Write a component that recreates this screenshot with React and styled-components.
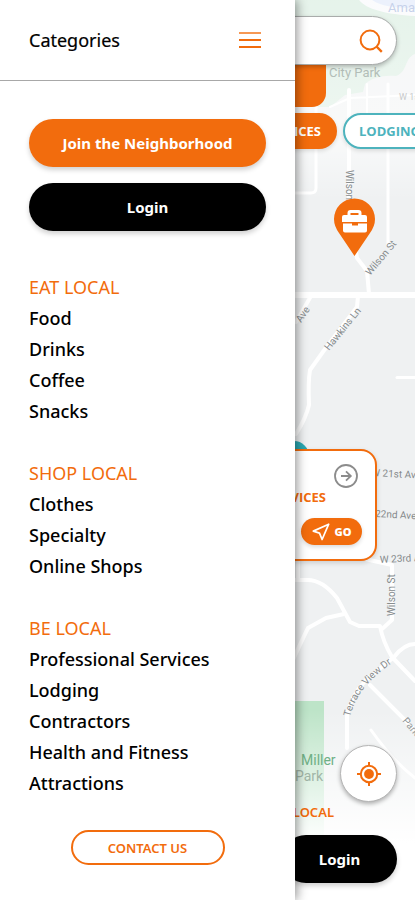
import React from "react";
import styled, { createGlobalStyle, css } from "styled-components";

const ORANGE = "#f26c0d";
const TEAL = "#4db3bd";

const GlobalStyle = createGlobalStyle`
  *, *::before, *::after { box-sizing: border-box; }
  body {
    margin: 0;
    background: #fff;
    color: #000;
    font-family: "Noto Sans", "Open Sans", sans-serif;
  }
  button, input { font: inherit; color: inherit; }
`;

const Page = styled.div`
  position: relative;
  min-height: 100vh;
  overflow: hidden;
`;

/* ---------- Menu drawer ---------- */

const Drawer = styled.aside`
  position: absolute;
  inset: 0 auto 0 0;
  z-index: 2;
  width: 295px;
  background: #fff;
  box-shadow: 2px 0 10px rgba(0, 0, 0, 0.42);
`;

const DrawerHeader = styled.header`
  display: flex;
  align-items: center;
  justify-content: space-between;
  height: 81px;
  padding: 0 34px 0 29px;
  border-bottom: 1px solid #a8a8a8;
`;

const DrawerTitle = styled.h1`
  margin: 0;
  font-size: 18px;
  font-weight: 400;
  line-height: 24px;
  -webkit-text-stroke: 0.2px #000;
`;

const IconButton = styled.button`
  display: flex;
  align-items: center;
  justify-content: center;
  padding: 0;
  border: 0;
  background: none;
  color: ${ORANGE};
  cursor: pointer;
`;

const DrawerBody = styled.div`
  display: flex;
  flex-direction: column;
  padding: 38px 29px 0;
`;

const Actions = styled.div`
  display: flex;
  flex-direction: column;
  gap: 16px;
  margin-bottom: 41px;
`;

const PillButton = styled.button`
  height: 48px;
  padding: 0 24px;
  border: 0;
  border-radius: 24px;
  background: ${({ $dark }) => ($dark ? "#000" : ORANGE)};
  color: #fff;
  font-size: 15px;
  font-weight: 700;
  white-space: nowrap;
  box-shadow: 0 3px 5px rgba(0, 0, 0, 0.18);
  cursor: pointer;
`;

const Menu = styled.nav`
  display: flex;
  flex-direction: column;
  gap: 31px;
`;

const GroupTitle = styled.h2`
  margin: 0;
  color: ${ORANGE};
  font-size: 18px;
  font-weight: 400;
  line-height: 31px;
`;

const LinkList = styled.ul`
  margin: 0;
  padding: 0;
  list-style: none;
`;

const MenuLink = styled.a`
  display: block;
  color: #000;
  font-size: 18px;
  font-weight: 500;
  line-height: 31px;
  text-decoration: none;
`;

const ContactButton = styled.button`
  align-self: center;
  width: 154px;
  height: 35px;
  margin-top: 31px;
  border: 2px solid ${ORANGE};
  border-radius: 18px;
  background: #fff;
  color: ${ORANGE};
  font-size: 13px;
  font-weight: 600;
  cursor: pointer;
`;

/* ---------- Map screen ---------- */

const Screen = styled.main`
  position: relative;
  display: flex;
  flex-direction: column;
  min-height: 100vh;
  padding: 16px 18px 17px;
`;

const MapDrawing = styled.svg`
  position: absolute;
  inset: 0;
  width: 100%;
  height: 100%;
`;

const Layer = styled.div`
  position: relative;
  display: flex;
  flex: 1;
  flex-direction: column;
`;

const SearchBar = styled.form`
  position: relative;
  z-index: 1;
  display: flex;
  align-items: center;
  height: 49px;
  padding: 0 13px 0 24px;
  border: 1px solid #a9acab;
  border-radius: 25px;
  background: #fff;
  box-shadow: 0 2px 4px rgba(0, 0, 0, 0.25);
`;

const SearchInput = styled.input`
  flex: 1;
  min-width: 0;
  border: 0;
  outline: 0;
  background: none;
  font-size: 16px;
`;

const ActiveTab = styled.div`
  align-self: flex-end;
  width: 120px;
  height: 42px;
  margin-right: 71px;
  border-radius: 0 0 14px 14px;
  background: ${ORANGE};
`;

const ChipRow = styled.div`
  display: flex;
  gap: 6px;
  justify-content: flex-end;
  margin: 6px -68px 0 0;
`;

const Chip = styled.button`
  flex: none;
  height: 36px;
  padding: 0 14px;
  border: 2px solid ${({ $active }) => ($active ? ORANGE : TEAL)};
  border-radius: 18px;
  background: ${({ $active }) => ($active ? ORANGE : "#fff")};
  color: ${({ $active }) => ($active ? "#fff" : TEAL)};
  font-family: "Open Sans", "Noto Sans", sans-serif;
  font-size: 13px;
  font-weight: 700;
  white-space: nowrap;
  box-shadow: 0 2px 4px rgba(0, 0, 0, 0.12);
  cursor: pointer;
  ${({ $wide }) => $wide && css`width: 122px; text-align: left;`}
`;

const PlaceCard = styled.article`
  display: flex;
  flex-direction: column;
  align-items: flex-end;
  align-self: flex-end;
  width: 320px;
  height: 112px;
  max-width: 100%;
  margin: 300px 20px 0 0;
  padding: 13px 13px 0;
  border: 2px solid ${ORANGE};
  border-radius: 16px;
  background: #fff;
  box-shadow: 0 2px 5px rgba(0, 0, 0, 0.15);
`;

const ArrowButton = styled(IconButton)`
  margin-right: 4px;
  color: #8c8c8c;
`;

const PlaceKind = styled.p`
  margin: 0 36px 0 0;
  color: ${ORANGE};
  font-family: "Open Sans", "Noto Sans", sans-serif;
  font-size: 13px;
  font-weight: 700;
  line-height: 18px;
`;

const GoButton = styled.button`
  display: flex;
  align-items: center;
  justify-content: center;
  gap: 5px;
  width: 61px;
  height: 27px;
  margin-top: 12px;
  padding: 0;
  border: 0;
  border-radius: 14px;
  background: ${ORANGE};
  color: #fff;
  font-family: "Open Sans", "Noto Sans", sans-serif;
  font-size: 11px;
  font-weight: 800;
  box-shadow: 0 2px 4px rgba(0, 0, 0, 0.15);
  cursor: pointer;
`;

const Footer = styled.footer`
  display: flex;
  flex-direction: column;
  align-items: flex-end;
  margin-top: auto;
`;

const LocateButton = styled(IconButton)`
  width: 57px;
  height: 57px;
  border: 1px solid #b5b5b5;
  border-radius: 50%;
  background: #fff;
  box-shadow: 0 2px 4px rgba(0, 0, 0, 0.3);
`;

const FooterTab = styled.a`
  margin: 0 63px 13px 0;
  color: ${ORANGE};
  font-size: 13px;
  font-weight: 600;
  line-height: 20px;
  text-decoration: none;
`;

const FooterLogin = styled(PillButton)`
  width: 115px;
`;

/* ---------- Icons ---------- */

const MenuIcon = () => (
  <svg width="22" height="18" viewBox="0 0 22 18" fill="none" stroke="currentColor" strokeWidth="2" aria-hidden="true">
    <path d="M0 2h22" opacity=".7" />
    <path d="M0 9h22M0 16h22" />
  </svg>
);

const SearchIcon = () => (
  <svg width="24" height="24" viewBox="0 0 24 24" fill="none" stroke="currentColor" strokeWidth="2" aria-hidden="true">
    <circle cx="11" cy="11" r="9.4" />
    <path d="M17.5 17.5l5.3 5.3" strokeWidth="2.4" />
  </svg>
);

const ArrowIcon = () => (
  <svg width="24" height="24" viewBox="0 0 24 24" fill="none" stroke="currentColor" strokeWidth="1.8" aria-hidden="true">
    <circle cx="12" cy="12" r="11" />
    <path d="M7 12h9.5M12 7.3l4.8 4.7-4.8 4.7" />
  </svg>
);

const SendIcon = () => (
  <svg width="18" height="18" viewBox="0 0 18 18" fill="none" stroke="currentColor" strokeWidth="1.7" strokeLinejoin="round" aria-hidden="true">
    <path d="M16.7 1.2L1.3 8.1l6.2 2 2.6 6.4z" />
  </svg>
);

const LocateIcon = () => (
  <svg width="26" height="26" viewBox="0 0 26 26" fill="none" stroke="currentColor" strokeWidth="2" aria-hidden="true">
    <circle cx="13" cy="13" r="8.2" />
    <circle cx="13" cy="13" r="4.9" fill="currentColor" stroke="none" />
    <path d="M13 1v4M13 21v4M1 13h4M21 13h4" />
  </svg>
);

const Label = styled.text`
  fill: ${({ $color }) => $color || "#858a8c"};
  font-family: Roboto, sans-serif;
  font-size: ${({ $size }) => $size || 10}px;
`;

const NeighborhoodMap = () => (
  <MapDrawing viewBox="0 0 415 900" preserveAspectRatio="xMaxYMin slice" role="img" aria-label="Neighborhood map">
    <defs>
      <linearGradient id="topFade" x1="0" y1="0" x2="0" y2="1">
        <stop offset="0" stopColor="#fff" stopOpacity=".4" />
        <stop offset=".7" stopColor="#fff" stopOpacity=".6" />
        <stop offset="1" stopColor="#fff" stopOpacity="0" />
      </linearGradient>
      <linearGradient id="bottomFade" x1="0" y1="0" x2="0" y2="1">
        <stop offset="0" stopColor="#fff" stopOpacity="0" />
        <stop offset=".7" stopColor="#fff" stopOpacity="1" />
      </linearGradient>
      <path id="terraceCurve" d="M350 717Q354 700 366 686T398 659" />
    </defs>
    <rect width="415" height="900" fill="#eff1f2" />
    <path d="M280 0H415V54C404 58 408 72 396 76C382 75 372 78 365 84L363 92L345 95L330 107H280Z" fill="#d5ebdd" />
    <path d="M357 -4C361 8 382 14 415 16V-4Z" fill="#f8f9fb" />
    <path d="M370 -2C378 7 396 7 415 9V-2Z" fill="#dfe8fa" />
    <rect x="280" y="701" width="44" height="199" fill="#bde4c8" />
    <g fill="none" stroke="#fff" strokeWidth="4" strokeLinecap="round" strokeLinejoin="round">
      <path d="M349 90V210L357 258L367 271L369 294" />
      <path d="M388 84V246M316 107V188Q316 193 311 193H280" strokeWidth="3" />
      <path d="M367 84V114M330 107L350 98L415 95" strokeWidth="2" />
      <path d="M280 295H415" strokeWidth="6" />
      <path d="M311 296L296 322M358 296L357 307L325 349L310 370Q308 382 309 405Q306 418 296 434" />
      <path d="M397 377.500H415" strokeWidth="3" />
      <path d="M365 559L392 565V620L382 629" />
      <path d="M298 560V580M280 580H306Q322 579 337 598L350 622L359 626H380Q383 642 392 657L415 681" />
      <path d="M344 614L326 618L308 628Q302 640 292 662" />
      <path d="M415 644Q404 644 394 657L366 680Q350 697 347 716V748" />
      <path d="M370 685L415 730" />
      <path d="M371 730Q392 760 415 778" strokeWidth="3" />
    </g>
    <Label x="388" y="12" $size={13} $color="#9fb2dc">Amazon</Label>
    <Label x="399" y="100" $size={9}>W 1st</Label>
    <rect x="280" width="135" height="200" fill="url(#topFade)" />
    <Label x="329" y="77" $size={13} $color="#b3beb8">City Park</Label>
    <Label transform="translate(346 170) rotate(90)">Wilson</Label>
    <Label transform="translate(370 276) rotate(-50)">Wilson St</Label>
    <Label transform="translate(301 323) rotate(-56)">Ave</Label>
    <Label transform="translate(329 351) rotate(-51)">Hawkins Ln</Label>
    <Label x="371" y="476" transform="rotate(3 371 476)">W 21st Ave</Label>
    <Label x="375" y="517" transform="rotate(3 375 517)">22nd Ave</Label>
    <Label x="380" y="563" transform="rotate(-3 380 563)">W 23rd Ave</Label>
    <Label transform="translate(395 616) rotate(-90)">Wilson St</Label>
    <Label>
      <textPath href="#terraceCurve">Terrace View Dr</textPath>
    </Label>
    <Label transform="translate(402 721) rotate(50)">Park</Label>
    <rect x="280" y="710" width="135" height="190" fill="url(#bottomFade)" />
    <Label x="301" y="765" $size={14} $color="#6fb086">Miller</Label>
    <Label x="295" y="781" $size={14} $color="#a1b5a7">Park</Label>
    <circle cx="294" cy="456" r="15" fill="#2baab4" />
    <path d="M354.500 256L339 233Q334 226 334 219A20.500 20.500 0 0 1 375 219Q375 226 370 233Z" fill={ORANGE} />
    <path d="M349 216v-3q0-1.500 1.500-1.500h8q1.500 0 1.500 1.500v3" fill="none" stroke="#fff" strokeWidth="3" />
    <path d="M345 215h20q2 0 2 2v5h-25v-5q0-2 2-2zM343 223.500h9v2h6v-2h9v7q0 2-2 2h-20q-2 0-2-2z" fill="#fff" />
  </MapDrawing>
);

const groups = [
  { title: "EAT LOCAL", links: ["Food", "Drinks", "Coffee", "Snacks"] },
  { title: "SHOP LOCAL", links: ["Clothes", "Specialty", "Online Shops"] },
  {
    title: "BE LOCAL",
    links: ["Professional Services", "Lodging", "Contractors", "Health and Fitness", "Attractions"],
  },
];

export default function App() {
  return (
    <Page>
      <GlobalStyle />
      <Screen>
        <NeighborhoodMap />
        <Layer>
          <SearchBar role="search" onSubmit={(event) => event.preventDefault()}>
            <SearchInput type="search" aria-label="Search" />
            <IconButton type="submit" aria-label="Search">
              <SearchIcon />
            </IconButton>
          </SearchBar>
          <ActiveTab />
          <ChipRow>
            <Chip type="button" $active>SERVICES</Chip>
            <Chip type="button" $wide>LODGING</Chip>
          </ChipRow>
          <PlaceCard>
            <ArrowButton type="button" aria-label="Open place">
              <ArrowIcon />
            </ArrowButton>
            <PlaceKind>SERVICES</PlaceKind>
            <GoButton type="button">
              <SendIcon />
              GO
            </GoButton>
          </PlaceCard>
          <Footer>
            <LocateButton type="button" aria-label="Find my location">
              <LocateIcon />
            </LocateButton>
            <FooterTab href="#local">LOCAL</FooterTab>
            <FooterLogin type="button" $dark>Login</FooterLogin>
          </Footer>
        </Layer>
      </Screen>

      <Drawer>
        <DrawerHeader>
          <DrawerTitle>Categories</DrawerTitle>
          <IconButton type="button" aria-label="Close menu">
            <MenuIcon />
          </IconButton>
        </DrawerHeader>
        <DrawerBody>
          <Actions>
            <PillButton type="button">Join the Neighborhood</PillButton>
            <PillButton type="button" $dark>Login</PillButton>
          </Actions>
          <Menu aria-label="Categories">
            {groups.map(({ title, links }) => (
              <section key={title}>
                <GroupTitle>{title}</GroupTitle>
                <LinkList>
                  {links.map((name) => (
                    <li key={name}>
                      <MenuLink href={`#${name.toLowerCase().replace(/ /g, "-")}`}>{name}</MenuLink>
                    </li>
                  ))}
                </LinkList>
              </section>
            ))}
          </Menu>
          <ContactButton type="button">CONTACT US</ContactButton>
        </DrawerBody>
      </Drawer>
    </Page>
  );
}
